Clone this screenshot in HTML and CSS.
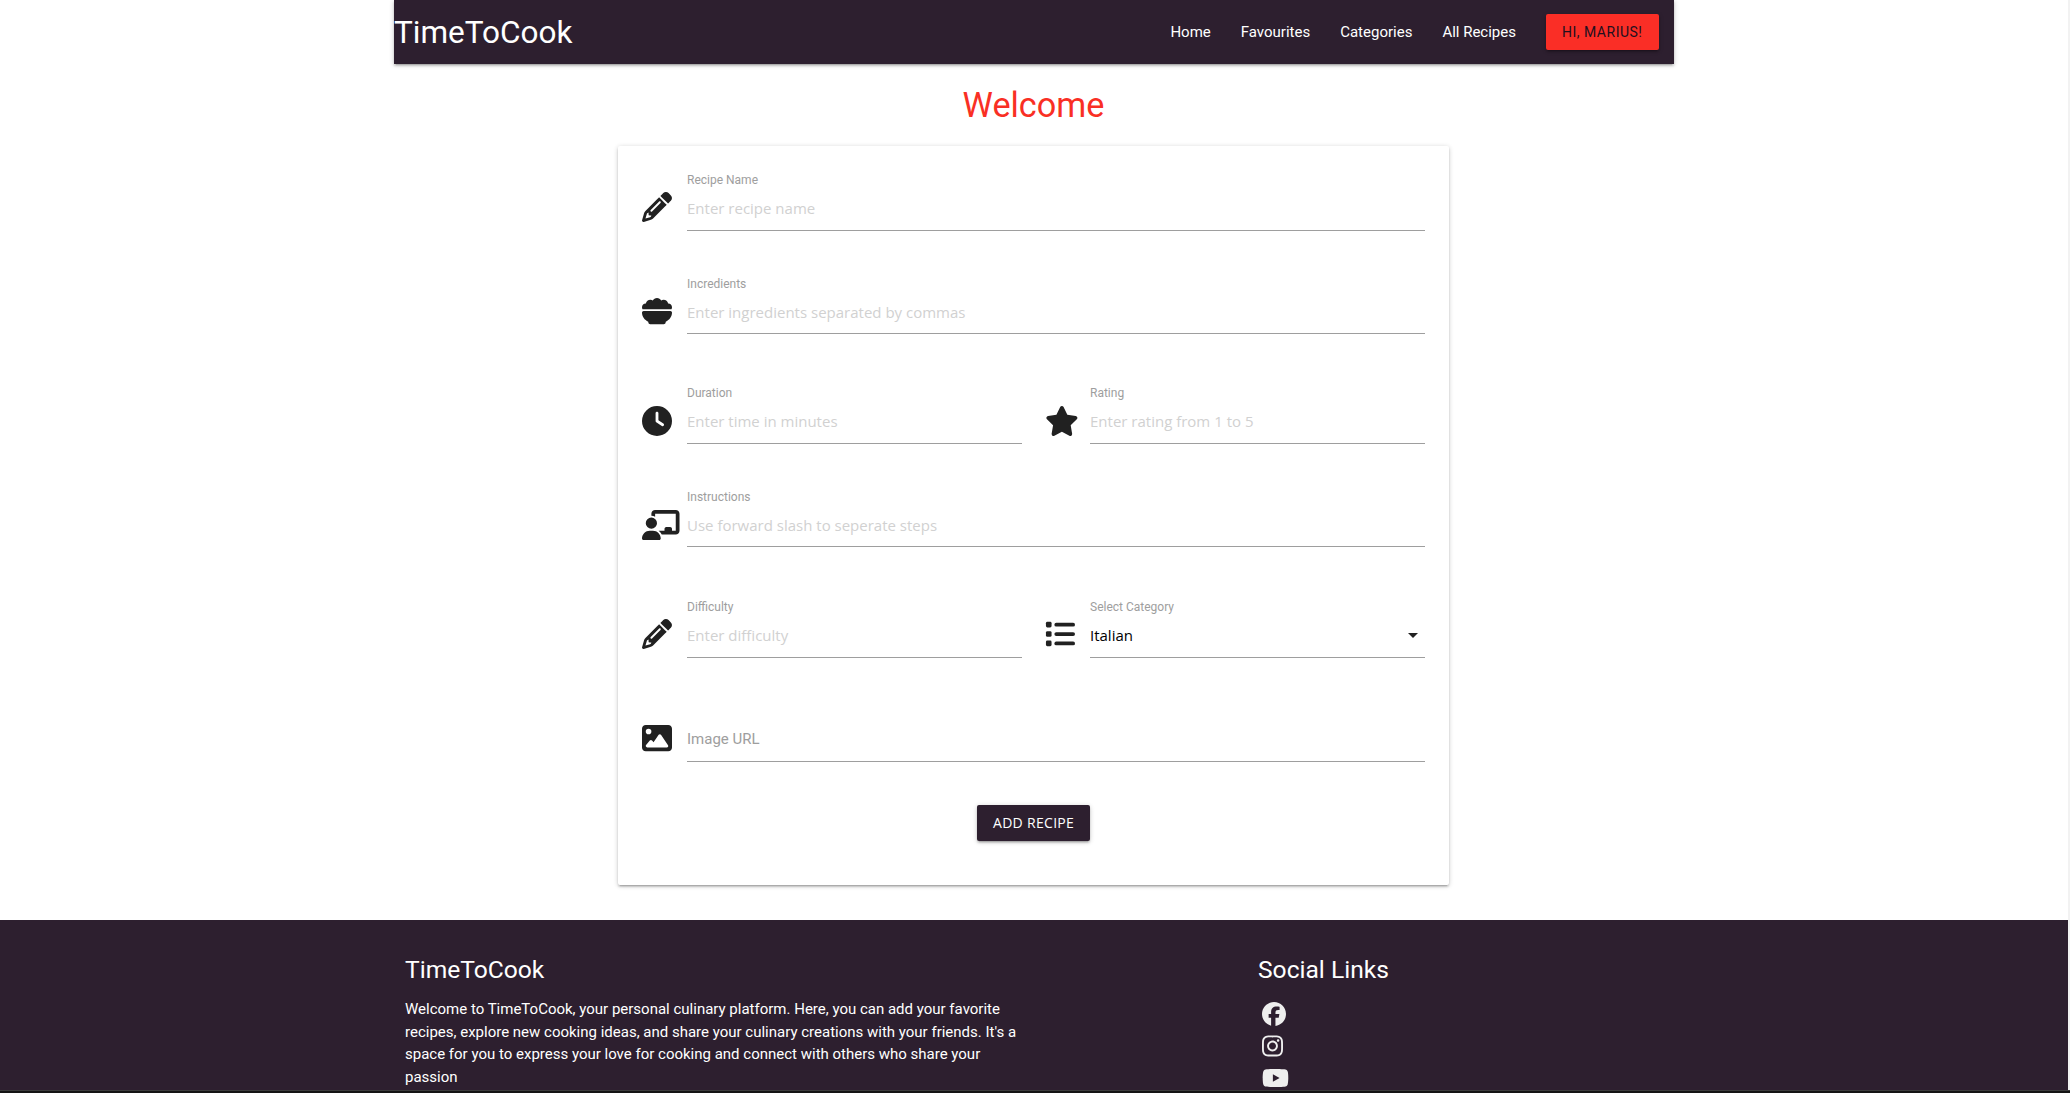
FILE: index.html
```html
<!DOCTYPE html>
<html lang="en">
<head>
<meta charset="utf-8">
<title>TimeToCook</title>
<link rel="stylesheet" href="styles.css">
</head>
<body>
<nav class="nav">
  <a class="brand">TimeToCook</a>
  <ul class="nav-links">
    <li>Home</li>
    <li>Favourites</li>
    <li>Categories</li>
    <li>All Recipes</li>
  </ul>
  <a class="btn btn-user">Hi, Marius!</a>
</nav>
<main class="main">
  <h4 class="welcome">Welcome</h4>
  <form class="card">
    <div class="row">
      <div class="field">
        <svg class="icon" viewBox="0 0 512 512"><use href="#pencil"/></svg>
        <div class="control"><label>Recipe Name</label><input type="text" placeholder="Enter recipe name"></div>
      </div>
    </div>
    <div class="row row-area">
      <div class="field">
        <svg class="icon" viewBox="0 0 512 512"><path d="M0 192c0-35.3 28.7-64 64-64c.5 0 1.1 0 1.6 0C73 91.5 105.3 64 144 64c15 0 29 4.1 40.9 11.2C198.2 49.6 225.1 32 256 32s57.8 17.6 71.1 43.2C339 68.1 353 64 368 64c38.7 0 71 27.5 78.4 64c.5 0 1.1 0 1.6 0c35.3 0 64 28.7 64 64c0 11.7-3.1 22.6-8.6 32H8.6C3.1 214.6 0 203.7 0 192zm0 91.4C0 268.3 12.3 256 27.4 256H484.6c15.1 0 27.4 12.3 27.4 27.4c0 70.5-44.4 130.7-106.7 154.1L403.5 452c-2 16-15.6 28-31.8 28H140.2c-16.1 0-29.8-12-31.8-28l-1.8-14.4C44.4 414.1 0 353.9 0 283.4z"/></svg>
        <div class="control"><label>Incredients</label><input type="text" placeholder="Enter ingredients separated by commas"></div>
      </div>
    </div>
    <div class="row row-low">
      <div class="field">
        <svg class="icon" viewBox="0 0 512 512"><path d="M256 0a256 256 0 1 1 0 512A256 256 0 1 1 256 0zM232 120V256c0 8 4 15.5 10.7 20l96 64c11 7.4 25.9 4.4 33.3-6.7s4.4-25.9-6.7-33.3L280 243.2V120c0-13.3-10.7-24-24-24s-24 10.7-24 24z"/></svg>
        <div class="control"><label>Duration</label><input type="text" placeholder="Enter time in minutes"></div>
      </div>
      <div class="field">
        <svg class="icon icon-star" viewBox="0 0 576 512"><path d="M316.9 18C311.6 7 300.4 0 288.1 0s-23.4 7-28.8 18L195 150.3 51.4 171.5c-12 1.8-22 10.2-25.7 21.7s-.7 24.2 7.9 32.7L137.8 329 113.2 474.7c-2 12 3 24.2 12.9 31.3s23 8 33.8 2.3l128.3-68.5 128.3 68.5c10.8 5.7 23.9 4.9 33.8-2.3s14.9-19.3 12.9-31.3L438.5 329 542.7 225.9c8.6-8.5 11.7-21.2 7.9-32.7s-13.7-19.9-25.7-21.7L381.2 150.3 316.9 18z"/></svg>
        <div class="control"><label>Rating</label><input type="text" placeholder="Enter rating from 1 to 5"></div>
      </div>
    </div>
    <div class="row row-area row-low row-steps">
      <div class="field">
        <svg class="icon icon-board" viewBox="0 0 640 512"><path d="M160 64c0-35.3 28.7-64 64-64H576c35.3 0 64 28.7 64 64V352c0 35.3-28.7 64-64 64H336.8c-11.8-25.5-29.9-47.5-52.4-64H384V320c0-17.7 14.3-32 32-32h64c17.7 0 32 14.3 32 32v32h64V64L224 64v49.1C205.2 102.2 183.3 96 160 96V64zm0 64a96 96 0 1 1 0 192 96 96 0 1 1 0-192zM133.3 352h53.3C260.3 352 320 411.7 320 485.3c0 14.7-11.9 26.7-26.7 26.7H26.7C11.9 512 0 500.1 0 485.3C0 411.7 59.7 352 133.3 352z"/></svg>
        <div class="control"><label>Instructions</label><input type="text" placeholder="Use forward slash to seperate steps"></div>
      </div>
    </div>
    <div class="row">
      <div class="field">
        <svg class="icon" viewBox="0 0 512 512"><path id="pencil" d="M410.3 231l11.3-11.3-33.9-33.9-62.1-62.1L291.7 89.8l-11.3 11.3-22.6 22.6L58.6 322.9c-10.4 10.4-18 23.3-22.2 37.4L1 480.7c-2.5 8.4-.2 17.5 6.1 23.7s15.3 8.5 23.7 6.1l120.3-35.4c14.1-4.2 27-11.8 37.4-22.2L387.7 253.7 410.3 231zM160 399.4l-9.1 22.7c-4 3.1-8.5 5.4-13.3 6.9L59.4 452l23-78.1c1.4-4.9 3.8-9.4 6.9-13.3l22.7-9.1v32c0 8.8 7.2 16 16 16h32zM362.7 18.7L348.3 33.2 325.7 55.8 314.3 67.1l33.9 33.9 62.1 62.1 33.9 33.9 11.3-11.3 22.6-22.6 14.5-14.5c25-25 25-65.5 0-90.5L453.3 18.7c-25-25-65.5-25-90.5 0zm-47.4 168l-144 144c-6.2 6.2-16.4 6.2-22.6 0s-6.2-16.4 0-22.6l144-144c6.2-6.2 16.4-6.2 22.6 0s6.2 16.4 0 22.6z"/></svg>
        <div class="control"><label>Difficulty</label><input type="text" placeholder="Enter difficulty"></div>
      </div>
      <div class="field">
        <svg class="icon" viewBox="0 0 512 512"><rect x="16" y="48" width="96" height="96" rx="24"/><rect x="16" y="208" width="96" height="96" rx="24"/><rect x="16" y="368" width="96" height="96" rx="24"/><rect x="160" y="64" width="352" height="64" rx="32"/><rect x="160" y="224" width="352" height="64" rx="32"/><rect x="160" y="384" width="352" height="64" rx="32"/></svg>
        <div class="control"><label>Select Category</label>
          <div class="select"><span>Italian</span><svg class="caret" viewBox="0 0 24 24"><path d="M7 10l5 5 5-5z"/></svg></div>
        </div>
      </div>
    </div>
    <div class="row">
      <div class="field">
        <svg class="icon" viewBox="0 0 512 512"><path d="M0 96C0 60.7 28.7 32 64 32H448c35.3 0 64 28.7 64 64V416c0 35.3-28.7 64-64 64H64c-35.3 0-64-28.7-64-64V96zM323.8 202.5c-4.5-6.6-11.9-10.5-19.8-10.5s-15.4 3.9-19.8 10.5l-87 127.6L170.7 297c-4.6-5.7-11.5-9-18.7-9s-14.2 3.3-18.7 9l-64 80c-5.8 7.2-6.9 17.1-2.9 25.4s12.4 13.6 21.6 13.6h96 32H424c8.9 0 17.1-4.9 21.2-12.8s3.6-17.4-1.4-24.7l-120-176zM112 192a48 48 0 1 0 0-96 48 48 0 1 0 0 96z"/></svg>
        <div class="control control-url"><input type="text" placeholder="Image URL"></div>
      </div>
    </div>
    <button class="btn btn-add" type="button">Add Recipe</button>
  </form>
</main>
<footer class="footer">
  <div class="footer-inner">
    <div class="about">
      <h5>TimeToCook</h5>
      <p>Welcome to TimeToCook, your personal culinary platform. Here, you can add your favorite recipes, explore new cooking ideas, and share your culinary creations with your friends. It's a space for you to express your love for cooking and connect with others who share your passion</p>
    </div>
    <div class="social">
      <h5>Social Links</h5>
      <ul>
        <li><svg viewBox="0 0 512 512" width="24" height="24"><path d="M512 256C512 114.6 397.4 0 256 0S0 114.6 0 256C0 376 82.7 476.8 194.2 504.5V334.2H141.4V256h52.8V222.3c0-87.1 39.4-127.5 125-127.5c16.2 0 44.2 3.2 55.7 6.4V172c-6-.6-16.5-1-29.6-1c-42 0-58.2 15.9-58.2 57.2V256h83.6l-14.4 78.2H287V510.1C413.8 494.8 512 386.9 512 256h0z"/></svg></li>
        <li><svg viewBox="0 0 448 512" width="21" height="24"><path d="M224.1 141c-63.6 0-114.9 51.3-114.9 114.9s51.3 114.9 114.9 114.9S339 319.5 339 255.9 287.7 141 224.1 141zm0 189.6c-41.1 0-74.7-33.5-74.7-74.7s33.5-74.7 74.7-74.7 74.7 33.5 74.7 74.7-33.6 74.7-74.7 74.7zm146.4-194.3c0 14.9-12 26.8-26.8 26.8-14.9 0-26.8-12-26.8-26.8s12-26.8 26.8-26.8 26.8 12 26.8 26.8zm76.1 27.2c-1.7-35.9-9.9-67.7-36.2-93.9-26.2-26.2-58-34.4-93.9-36.2-37-2.1-147.9-2.1-184.9 0-35.8 1.7-67.6 9.9-93.9 36.1s-34.4 58-36.2 93.9c-2.1 37-2.1 147.9 0 184.9 1.7 35.9 9.9 67.7 36.2 93.9s58 34.4 93.9 36.2c37 2.1 147.9 2.1 184.9 0 35.9-1.7 67.7-9.9 93.9-36.2 26.2-26.2 34.4-58 36.2-93.9 2.1-37 2.1-147.8 0-184.8zM398.8 388c-7.8 19.6-22.9 34.7-42.6 42.6-29.5 11.7-99.5 9-132.1 9s-102.7 2.6-132.1-9c-19.6-7.8-34.7-22.9-42.6-42.6-11.7-29.5-9-99.5-9-132.1s-2.6-102.7 9-132.1c7.8-19.6 22.9-34.7 42.6-42.6 29.5-11.7 99.5-9 132.1-9s102.7-2.6 132.1 9c19.6 7.8 34.7 22.9 42.6 42.6 11.7 29.5 9 99.5 9 132.1s2.7 102.7-9 132.1z"/></svg></li>
        <li><svg viewBox="0 0 576 512" width="27" height="24"><path d="M549.655 124.083c-6.281-23.65-24.787-42.276-48.284-48.597C458.781 64 288 64 288 64S117.22 64 74.629 75.486c-23.497 6.322-42.003 24.947-48.284 48.597-11.412 42.867-11.412 132.305-11.412 132.305s0 89.438 11.412 132.305c6.281 23.65 24.787 41.5 48.284 47.821C117.22 448 288 448 288 448s170.78 0 213.371-11.486c23.497-6.321 42.003-24.171 48.284-47.821 11.412-42.867 11.412-132.305 11.412-132.305s0-89.438-11.412-132.305zm-317.51 213.508V175.185l142.739 81.205-142.739 81.201z"/></svg></li>
      </ul>
    </div>
  </div>
</footer>
<div class="bottom-bar"></div>
</body>
</html>
```
FILE: styles.css
```css
* { box-sizing: border-box; }

body {
  margin: 0;
  height: 1093px;
  overflow: hidden;
  display: flex;
  flex-direction: column;
  background: linear-gradient(#f2f2f2, #f2f2f2) right / 2px 100% no-repeat #fff;
  font: 15px/1.5 Roboto, sans-serif;
  color: rgba(0, 0, 0, .87);
}

ul { list-style: none; margin: 0; padding: 0; }
svg { display: block; }
h4, h5 { margin: 0; font-weight: 400; }

.nav, .card, .btn {
  box-shadow: 0 2px 2px 0 rgba(0, 0, 0, .14), 0 3px 1px -2px rgba(0, 0, 0, .12), 0 1px 5px 0 rgba(0, 0, 0, .2);
}

.nav {
  flex: none;
  width: 1280px;
  height: 64px;
  margin-left: 394px;
  padding-right: 15px;
  display: flex;
  align-items: center;
  background: #2d1f2f;
  color: #fff;
}

.brand { padding-top: 1px; font-size: 31.5px; line-height: 64px; margin-right: auto; }
.nav-links { display: flex; gap: 30px; margin-right: 30px; }

.btn {
  height: 36px;
  padding: 0 16px;
  border: 0;
  border-radius: 2px;
  font-size: 14px;
  line-height: 36px;
  letter-spacing: .5px;
  text-transform: uppercase;
}
.btn-user { width: 113px; background: #fa2e26; color: #22101f; white-space: nowrap; }

.main {
  flex: none;
  width: 2067px;
  height: 856px;
  display: flex;
  flex-direction: column;
  align-items: center;
}

.welcome {
  height: 82px;
  padding-top: 22px;
  font-size: 34.2px;
  line-height: 38px;
  color: #f92f24;
}

.card {
  width: 831px;
  height: 739px;
  padding: 22px 24px 0;
  border-radius: 2px;
  display: flex;
  flex-direction: column;
}

.row { display: flex; gap: 23px; height: 63px; margin-bottom: 41px; }
.row-area { height: 62px; margin-bottom: 47px; }
.row-steps { margin-bottom: 48px; }

.field { flex: 1; display: flex; }
.icon { flex: none; width: 30px; height: 30px; margin: 24px 15px 0 0; fill: #212121; }
.icon-star { width: 33.75px; margin-right: 11.25px; }
.icon-board { width: 37.5px; margin-right: 7.5px; }
.row-low .icon { margin-top: 25px; }

.control { flex: 1; display: flex; flex-direction: column; }
label { height: 18px; padding-top: 6px; font-size: 12px; line-height: 13px; color: #9e9e9e; }

input, .select {
  flex: 1;
  width: 100%;
  min-height: 0;
  padding: 0;
  border: 0;
  border-bottom: 1px solid #9e9e9e;
  outline: 0;
  background: transparent;
  font: 15px "Open Sans", sans-serif;
  color: rgba(0, 0, 0, .87);
}
input::placeholder { color: #d1d1d1; opacity: 1; }

.select { display: flex; align-items: center; justify-content: space-between; color: #000; }
.caret { width: 24px; height: 24px; fill: #212121; }

.control-url { padding-top: 18px; }
.control-url input { font: 15px Roboto, sans-serif; }
.control-url input::placeholder { color: #9e9e9e; }

.btn-add {
  align-self: center;
  width: 113px;
  margin-top: 2px;
  background: #2d1f2f;
  color: #fff;
  font-family: "Open Sans", sans-serif;
  letter-spacing: .3px;
  white-space: nowrap;
}

.footer { flex: none; width: 2068px; height: 170px; background: #2d1f2f; color: #fff; overflow: hidden; }
.footer-inner { display: flex; width: 1258px; margin-left: 405px; padding-top: 36px; }
.footer h5 { font-size: 24.6px; line-height: 27px; }
.about { width: 618px; margin-right: 235px; }
.about p { margin: 15px 0 0; line-height: 22.6px; }
.social ul { margin: 19px 0 0 3.5px; display: grid; gap: 8px; }
.social svg { fill: #eee; }

.bottom-bar { flex: none; height: 3px; background: #141414; border-top: 1px solid #3c3c3c; }
```
